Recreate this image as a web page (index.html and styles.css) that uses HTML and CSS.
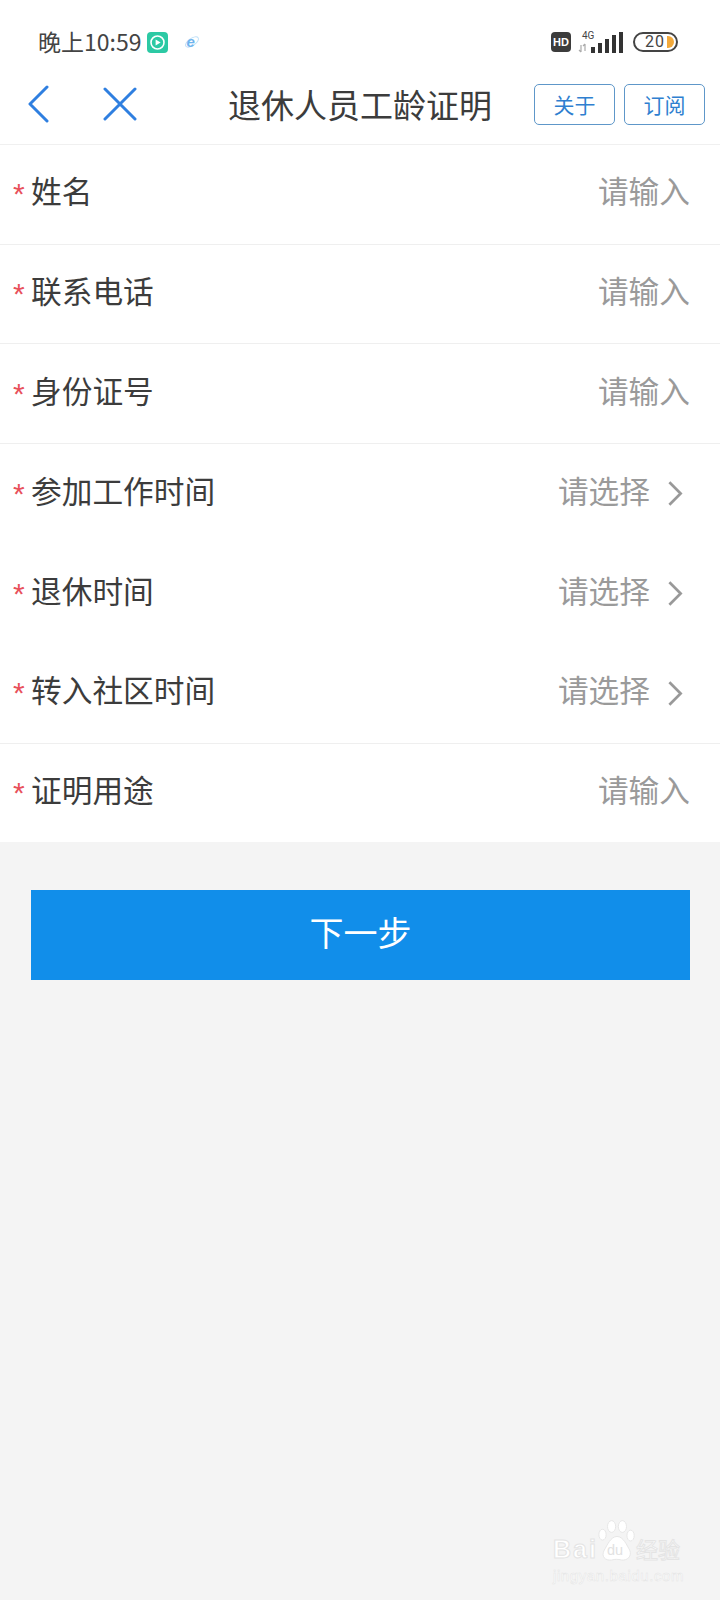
FILE: index.html
```html
<!DOCTYPE html>
<html lang="zh-CN">
<head>
    <meta charset="UTF-8">
    <meta name="viewport" content="width=device-width, initial-scale=1.0">
    <title>退休人员工龄证明</title>
    <link rel="stylesheet" href="styles.css">
</head>
<body>
    <div class="statusbar">
        <div class="status-left">
            <span class="clock">晚上10:59</span>
            <svg class="app-icon" width="21" height="21" viewBox="0 0 21 21">
                <rect width="21" height="21" rx="4" fill="#2CC9A4"/>
                <circle cx="10.5" cy="10.5" r="6.5" fill="none" stroke="#fff" stroke-width="1.6"/>
                <path d="M8.6 7.6 L13.6 10.5 L8.6 13.4 Z" fill="#fff"/>
            </svg>
            <svg class="ie-icon" width="16" height="16" viewBox="0 0 16 16">
                <ellipse cx="8" cy="8" rx="7.5" ry="3.6" transform="rotate(-35 8 8)" fill="none" stroke="#BFE0F8" stroke-width="1"/>
                <text x="2.5" y="13" font-size="15" font-weight="bold" font-style="italic" fill="#6FB4EE" font-family="Liberation Sans, sans-serif">e</text>
            </svg>
        </div>
        <div class="status-right">
            <span class="hd">HD</span>
            <svg class="signal" width="46" height="22" viewBox="0 0 46 22">
                <text x="4" y="8" font-size="10" fill="#444" font-family="Roboto, sans-serif">4G</text>
                <path d="M3 14v7M1 19l2 2M7 13v7M5 15l2-2" fill="none" stroke="#aaa" stroke-width="1.2"/>
                <rect x="13" y="16" width="4" height="6" fill="#333"/>
                <rect x="20" y="12" width="4" height="10" fill="#333"/>
                <rect x="27" y="8" width="4" height="14" fill="#333"/>
                <rect x="34" y="4" width="4" height="18" fill="#333"/>
                <rect x="41" y="1" width="4" height="21" fill="#333"/>
            </svg>
            <div class="battery"><span>20</span><i class="battery-fill"></i></div>
        </div>
    </div>

    <div class="navbar">
        <div class="nav-icons">
            <svg class="icon-back" width="22" height="38" viewBox="0 0 22 38">
                <path d="M20 2 L3 19 L20 36" fill="none" stroke="#2F7FE0" stroke-width="3" stroke-linecap="round" stroke-linejoin="round"/>
            </svg>
            <svg class="icon-close" width="34" height="34" viewBox="0 0 34 34">
                <path d="M2 2 L32 32 M32 2 L2 32" fill="none" stroke="#2F7FE0" stroke-width="3" stroke-linecap="round"/>
            </svg>
        </div>
        <div class="nav-title">退休人员工龄证明</div>
        <div class="nav-buttons">
            <a class="nav-btn">关于</a>
            <a class="nav-btn">订阅</a>
        </div>
    </div>

    <div class="form">
        <div class="row line"><span class="label"><i>*</i>姓名</span><span class="value">请输入</span></div>
        <div class="row line"><span class="label"><i>*</i>联系电话</span><span class="value">请输入</span></div>
        <div class="row line"><span class="label"><i>*</i>身份证号</span><span class="value">请输入</span></div>
        <div class="row"><span class="label"><i>*</i>参加工作时间</span><span class="value">请选择<svg class="arrow" width="16" height="27" viewBox="0 0 14 24"><path d="M2 2 L12 12 L2 22" fill="none" stroke="#999" stroke-width="2.4"/></svg></span></div>
        <div class="row"><span class="label"><i>*</i>退休时间</span><span class="value">请选择<svg class="arrow" width="16" height="27" viewBox="0 0 14 24"><path d="M2 2 L12 12 L2 22" fill="none" stroke="#999" stroke-width="2.4"/></svg></span></div>
        <div class="row line tall"><span class="label"><i>*</i>转入社区时间</span><span class="value">请选择<svg class="arrow" width="16" height="27" viewBox="0 0 14 24"><path d="M2 2 L12 12 L2 22" fill="none" stroke="#999" stroke-width="2.4"/></svg></span></div>
        <div class="row short"><span class="label"><i>*</i>证明用途</span><span class="value">请输入</span></div>
    </div>

    <div class="actions">
        <a class="next-btn">下一步</a>
    </div>

    <div class="watermark">
        <div class="wm-top">
            <span class="wm-bai">Bai</span>
            <svg class="wm-paw" width="38" height="42" viewBox="0 0 42 46">
                <g fill="#fff" stroke="#e4e4e4" stroke-width="1">
                    <ellipse cx="5" cy="16" rx="4" ry="6"/>
                    <ellipse cx="15" cy="7" rx="4.5" ry="6.5"/>
                    <ellipse cx="27" cy="7" rx="4.5" ry="6.5"/>
                    <ellipse cx="36" cy="17" rx="4" ry="6"/>
                    <path d="M21 18 C28 18 32 28 35 33 C38 40 32 45 26 44 C22 43 19 43 15 44 C8 45 3 40 7 33 C10 28 14 18 21 18 Z"/>
                </g>
                <text x="10" y="39" font-size="16" fill="#e2e2e2" font-family="Liberation Sans, sans-serif">du</text>
            </svg>
            <span class="wm-cn">经验</span>
        </div>
        <div class="wm-url">jingyan.baidu.com</div>
    </div>
</body>
</html>
```

FILE: styles.css
```css
* {
    margin: 0;
    padding: 0;
    box-sizing: border-box;
}
body {
    width: 720px;
    height: 1600px;
    background: #F4F4F4;
    color: #3A3A3A;
    font-family: "Noto Sans CJK SC", "Noto Sans", sans-serif;
    position: relative;
    overflow: hidden;
}
.statusbar {
    height: 64px;
    padding: 20px 42px 0 38px;
    background: #fff;
    display: flex;
    justify-content: space-between;
    align-items: center;
}
.status-left {
    display: flex;
    align-items: center;
}
.clock {
    margin-bottom: 3px;
    font-size: 23px;
    line-height: 30px;
    color: #444;
}
.app-icon {
    margin-left: 6px;
}
.ie-icon {
    margin-left: 16px;
}
.status-right {
    display: flex;
    align-items: center;
}
.hd {
    width: 20px;
    height: 20px;
    border-radius: 4px;
    background: #3C3C3C;
    color: #fff;
    font-family: "Liberation Sans", sans-serif;
    font-size: 11px;
    font-weight: bold;
    line-height: 20px;
    text-align: center;
}
.signal {
    margin-left: 7px;
}
.battery {
    margin-left: 9px;
    width: 45px;
    height: 20px;
    border: 2px solid #444;
    border-radius: 10px;
    position: relative;
    overflow: hidden;
    font-family: Roboto, sans-serif;
    font-size: 16px;
    letter-spacing: 1px;
    line-height: 16px;
    color: #444;
    padding-left: 10px;
}
.battery-fill {
    position: absolute;
    right: 2px;
    top: 2px;
    width: 7px;
    height: 12px;
    background: #F2A93B;
    border-radius: 0 6px 6px 0;
}
.navbar {
    height: 81px;
    padding-right: 15px;
    background: #fff;
    border-bottom: 1px solid #F0F0F0;
    display: flex;
    align-items: center;
}
.nav-icons {
    width: 228px;
    padding-left: 27px;
    display: flex;
    align-items: center;
    gap: 54px;
}
.nav-title {
    font-size: 33px;
    line-height: 44px;
    color: #3C3C3C;
}
.nav-buttons {
    margin-left: auto;
    display: flex;
    gap: 9px;
}
.nav-btn {
    width: 81px;
    height: 41px;
    border: 1px solid #5E97C9;
    border-radius: 5px;
    color: #2F7FD0;
    font-size: 21px;
    line-height: 38px;
    text-align: center;
}
.form {
    background: #fff;
}
.row {
    height: 99.7px;
    padding: 0 30px 8px 13px;
    display: flex;
    justify-content: space-between;
    align-items: center;
}
.row.tall {
    height: 100.6px;
}
.row.short {
    height: 98.3px;
}
.line {
    border-bottom: 1px solid #EFEFEF;
}
.label {
    font-size: 30.7px;
    line-height: 40px;
    color: #3C3C3C;
    display: flex;
    align-items: center;
}
.label i {
    width: 18px;
    padding-top: 8px;
    font-family: "Liberation Sans", sans-serif;
    font-size: 30px;
    font-style: normal;
    color: #E8505B;
}
.value {
    font-size: 30.7px;
    line-height: 40px;
    color: #9A9A9A;
    display: flex;
    align-items: center;
}
.arrow {
    margin-left: 17px;
    margin-right: 7px;
    margin-top: 8px;
}
.actions {
    padding: 48px 30px 0 31px;
}
.next-btn {
    display: block;
    height: 90px;
    background: #118EEA;
    color: #fff;
    font-size: 34px;
    line-height: 84px;
    text-align: center;
}
.watermark {
    position: absolute;
    left: 553px;
    top: 1520px;
    width: 135px;
}
.wm-top {
    display: flex;
    align-items: flex-end;
    height: 42px;
}
.wm-bai {
    font-family: "Liberation Sans", sans-serif;
    font-size: 25px;
    font-weight: bold;
    letter-spacing: 2px;
    line-height: 26px;
    color: #fff;
    -webkit-text-stroke: 1px #E4E4E4;
}
.wm-paw {
    flex: none;
}
.wm-cn {
    font-size: 22px;
    line-height: 28px;
    color: #fff;
    -webkit-text-stroke: 1px #E4E4E4;
    white-space: nowrap;
}
.wm-url {
    margin-top: 4px;
    font-family: "Liberation Sans", sans-serif;
    font-size: 15px;
    line-height: 20px;
    letter-spacing: 0.6px;
    color: #fff;
    -webkit-text-stroke: 0.5px #E4E4E4;
    white-space: nowrap;
}
```
